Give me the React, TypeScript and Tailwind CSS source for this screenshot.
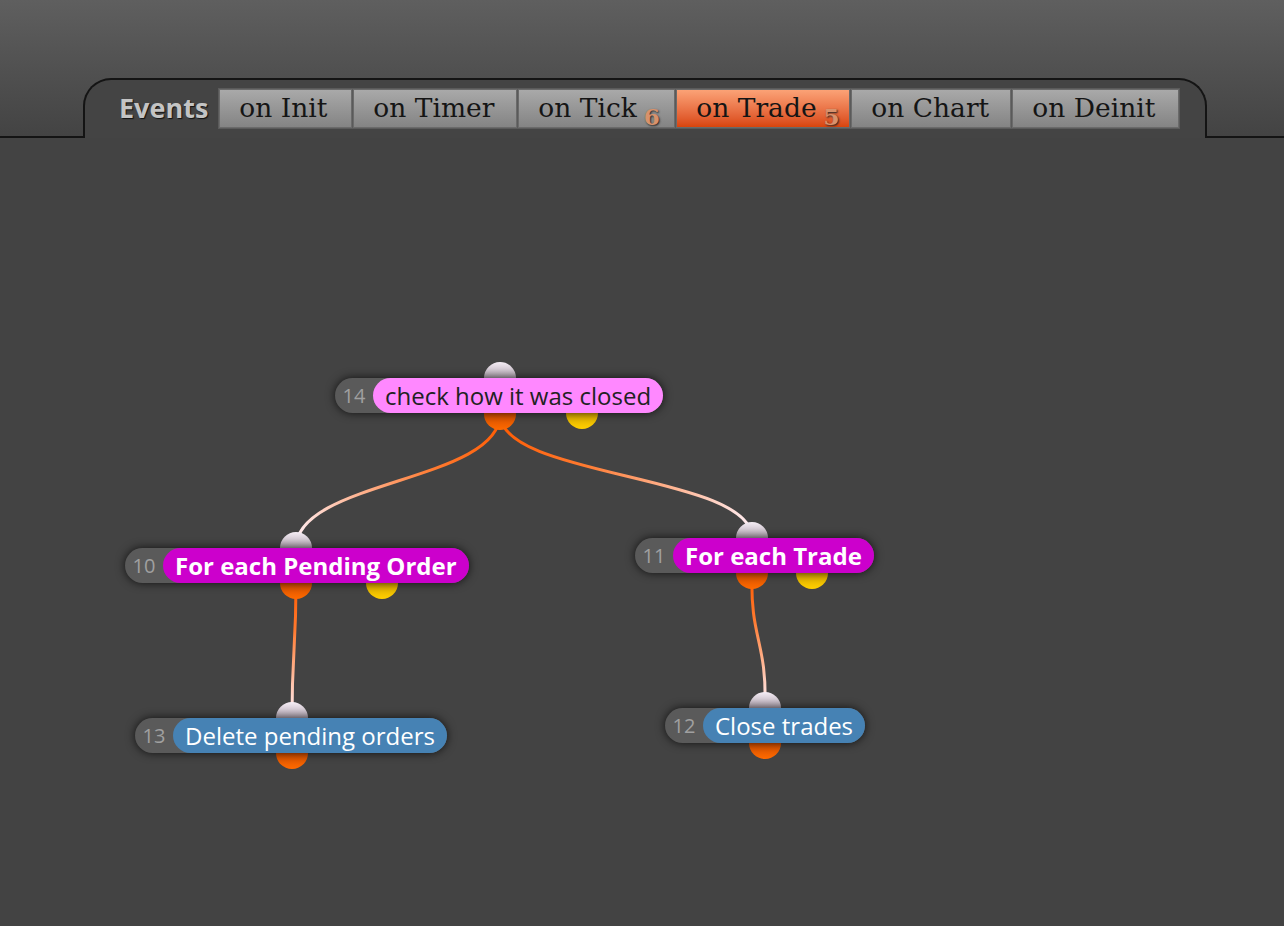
import React from "react";

const tabs = [
  { label: "on Init", w: 134 },
  { label: "on Timer", w: 165 },
  { label: "on Tick", w: 158, sub: "6" },
  { label: "on Trade", w: 175, sub: "5", active: true },
  { label: "on Chart", w: 161 },
  { label: "on Deinit", w: 168 },
];

type NodeProps = {
  x: number;
  y: number;
  num: string;
  label: string;
  kind: "pink" | "magenta" | "blue";
};

function Node({ x, y, num, label, kind }: NodeProps) {
  const color =
    kind === "pink"
      ? "bg-[#ff88ff] text-[#222] font-normal"
      : kind === "magenta"
      ? "bg-[#cc00cc] text-white font-bold"
      : "bg-[#4682b4] text-white font-normal";
  return (
    <div
      className="absolute flex items-center rounded-full bg-[#5a5a5a] shadow-[0_0_10px_rgba(0,0,0,0.75)] h-[35px]"
      style={{ left: x, top: y }}
    >
      <span className="w-[38px] text-center text-[20px] text-[#a0a0a0] leading-none">{num}</span>
      <span
        className={`h-[35px] flex items-center rounded-full px-[12px] text-[24px] leading-none whitespace-nowrap ${color}`}
      >
        {label}
      </span>
    </div>
  );
}

function Dot({ cx, cy, kind }: { cx: number; cy: number; kind: "in" | "out" | "alt" }) {
  const cls =
    kind === "in"
      ? "bg-linear-to-b from-[#f6eef6] to-[#6f5f6f]"
      : kind === "out"
      ? "bg-linear-to-b from-[#a83400] to-[#ff6a00]"
      : "bg-linear-to-b from-[#b08000] to-[#ffd000]";
  return (
    <div
      className={`absolute w-[32px] h-[32px] rounded-full ${cls}`}
      style={{ left: cx - 16, top: cy - 16 }}
    />
  );
}

const OFF = 138;

const links = [
  { id: "a", x1: 500, y1: 414, x2: 296, y2: 548, c1: [500, 482], c2: [296, 480] },
  { id: "b", x1: 500, y1: 414, x2: 752, y2: 538, c1: [500, 478], c2: [752, 474] },
  { id: "c", x1: 296, y1: 583, x2: 292, y2: 718, c1: [296, 650], c2: [292, 650] },
  { id: "d", x1: 752, y1: 573, x2: 765, y2: 708, c1: [750, 640], c2: [767, 640] },
];

export default function App() {
  return (
    <div
      className="w-[1284px] h-[926px] bg-[#434343] flex flex-col overflow-hidden"
      style={{ fontFamily: "'Open Sans', 'Noto Sans', sans-serif" }}
    >
      <div className="h-[138px] shrink-0 bg-linear-to-b from-[#5f5f5f] to-[#434343] flex items-end">
        <div className="w-[83px] h-[2px] bg-[#141414]" />
        <div className="w-[1124px] h-[60px] border-2 border-b-0 border-[#141414] rounded-t-[28px] bg-[#444444] flex items-start pl-[34px] pt-[8px]">
          <span className="text-[27px] font-bold text-[#c4c4c4] leading-[40px] [text-shadow:1px_1px_1px_#111]">
            Events
          </span>
          <div className="ml-[10px] flex bg-[#5a5a5a] p-[1px] gap-[1px]">
            {tabs.map((t) => (
              <div
                key={t.label}
                className={`h-[39px] flex items-center pl-[19px] border border-[#6a6a6a] ${
                  t.active
                    ? "bg-linear-to-b from-[#fba276] to-[#d8440a]"
                    : "bg-linear-to-b from-[#a9a9a9] to-[#848484]"
                }`}
                style={{ width: t.w - 1, fontFamily: "'DejaVu Serif', serif" }}
              >
                <span className="text-[26.5px] text-[#151515] leading-none whitespace-nowrap">{t.label}</span>
                {t.sub && (
                  <span className="ml-[7px] text-[23px] font-bold text-[#d8926c] leading-none relative top-[8px] [text-shadow:1px_1px_2px_#222]">
                    {t.sub}
                  </span>
                )}
              </div>
            ))}
          </div>
        </div>
        <div className="flex-1 h-[2px] bg-[#141414]" />
      </div>

      <div className="relative flex-1">
        <svg className="absolute inset-0" width={1284} height={788}>
          <defs>
            {links.map((l) => (
              <linearGradient
                key={l.id}
                id={`g-${l.id}`}
                gradientUnits="userSpaceOnUse"
                x1={l.x1}
                y1={l.y1 - OFF}
                x2={l.x2}
                y2={l.y2 - OFF}
              >
                <stop offset="0" stopColor="#ff5a00" />
                <stop offset="0.35" stopColor="#ff7a30" />
                <stop offset="1" stopColor="#fff2fa" />
              </linearGradient>
            ))}
          </defs>
          {links.map((l) => (
            <path
              key={l.id}
              d={`M${l.x1},${l.y1 - OFF} C${l.c1[0]},${l.c1[1] - OFF} ${l.c2[0]},${l.c2[1] - OFF} ${l.x2},${l.y2 - OFF}`}
              fill="none"
              stroke={`url(#g-${l.id})`}
              strokeWidth={3}
            />
          ))}
        </svg>

        <Dot cx={500} cy={378 - OFF} kind="in" />
        <Dot cx={500} cy={414 - OFF} kind="out" />
        <Dot cx={582} cy={413 - OFF} kind="alt" />

        <Dot cx={296} cy={548 - OFF} kind="in" />
        <Dot cx={296} cy={583 - OFF} kind="out" />
        <Dot cx={382} cy={583 - OFF} kind="alt" />

        <Dot cx={752} cy={538 - OFF} kind="in" />
        <Dot cx={752} cy={573 - OFF} kind="out" />
        <Dot cx={812} cy={573 - OFF} kind="alt" />

        <Dot cx={292} cy={718 - OFF} kind="in" />
        <Dot cx={292} cy={753 - OFF} kind="out" />

        <Dot cx={765} cy={708 - OFF} kind="in" />
        <Dot cx={765} cy={743 - OFF} kind="out" />

        <Node x={335} y={378 - OFF} num="14" label="check how it was closed" kind="pink" />
        <Node x={125} y={548 - OFF} num="10" label="For each Pending Order" kind="magenta" />
        <Node x={635} y={538 - OFF} num="11" label="For each Trade" kind="magenta" />
        <Node x={135} y={718 - OFF} num="13" label="Delete pending orders" kind="blue" />
        <Node x={665} y={708 - OFF} num="12" label="Close trades" kind="blue" />
      </div>
    </div>
  );
}
